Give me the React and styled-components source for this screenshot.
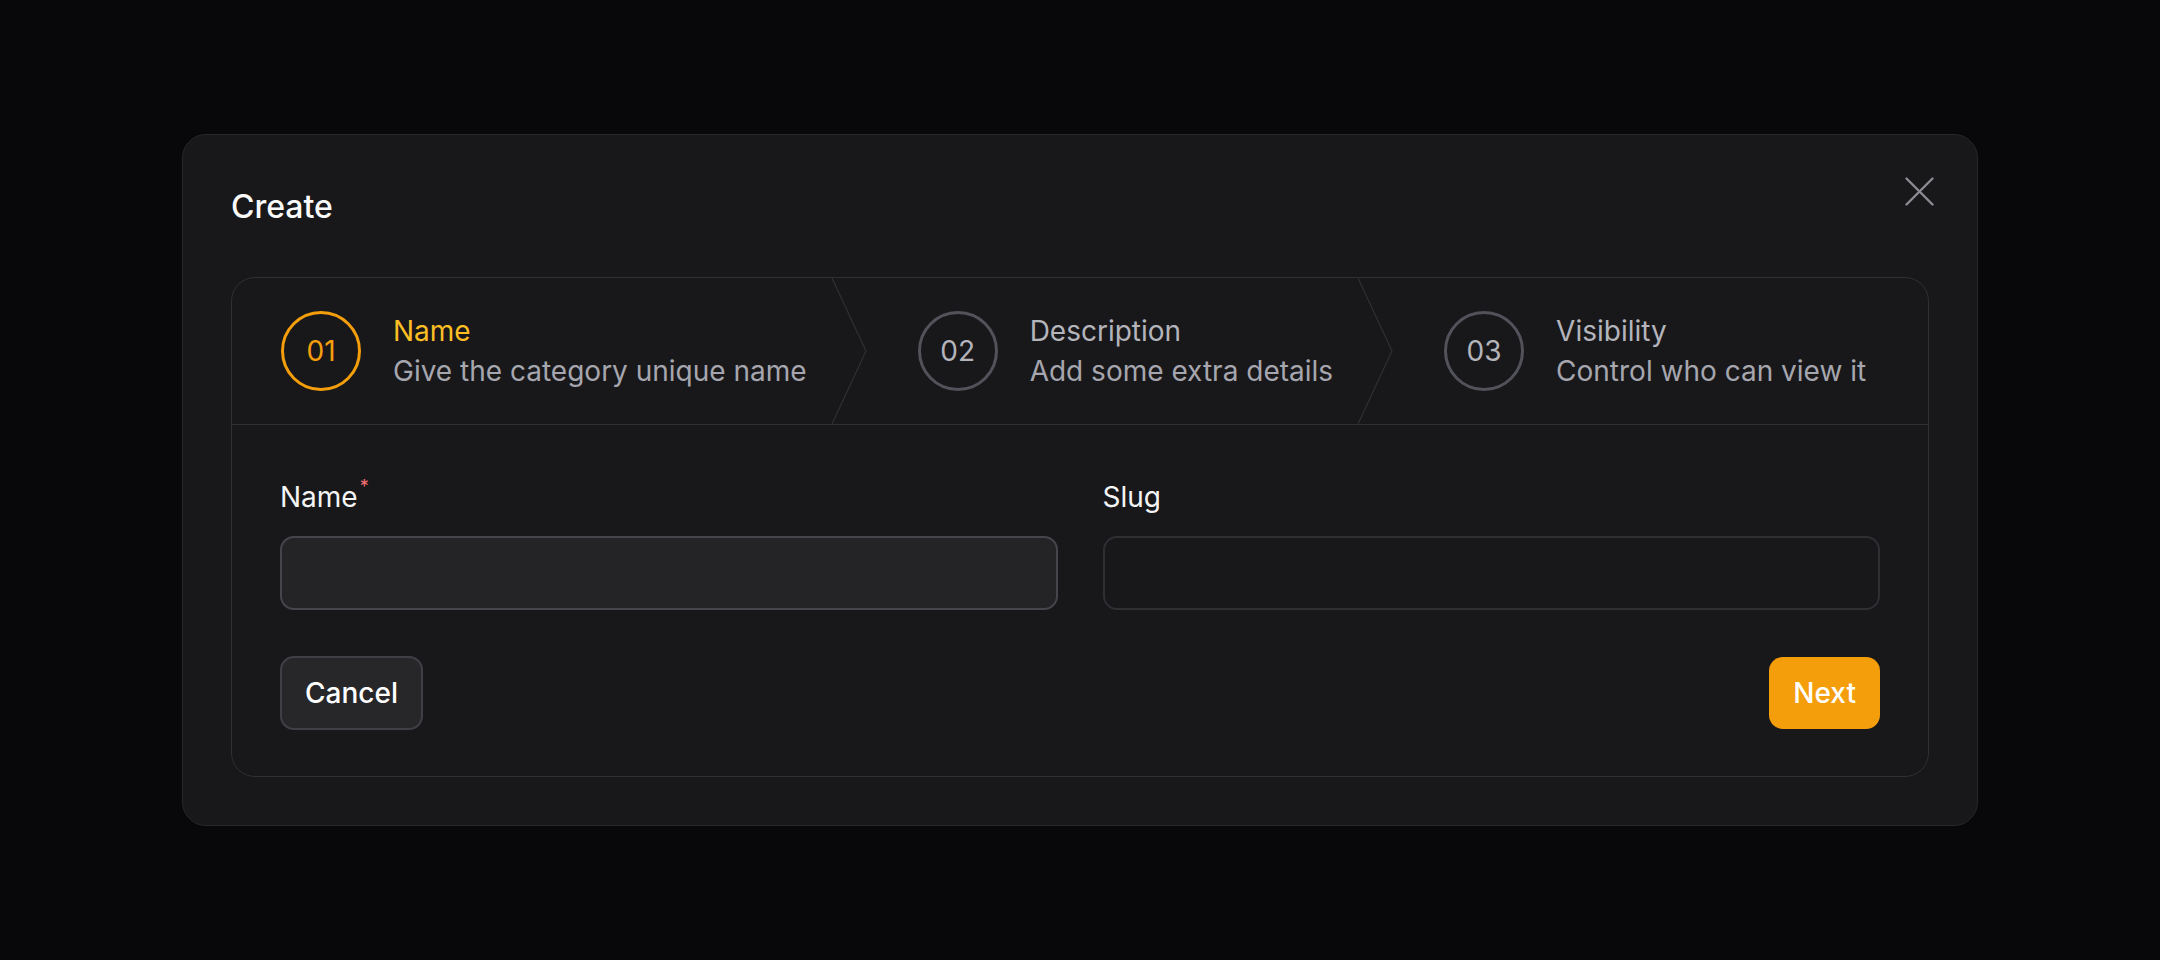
import React from "react";
import styled, { createGlobalStyle } from "styled-components";

const GlobalStyle = createGlobalStyle`
    * { box-sizing: border-box; }
    body {
        margin: 0;
        background: #08080a;
        font-family: Inter, "Noto Sans", "Liberation Sans", sans-serif;
        color: #f4f4f5;
    }
`;

const Page = styled.div`
    min-height: 960px;
    padding: 134px 0 0 182px;
`;

const Modal = styled.div`
    position: relative;
    width: 1796px;
    background: #18181b;
    border: 1px solid #27272a;
    border-radius: 24px;
    padding: 48px;
`;

const Header = styled.div`
    padding-top: 4px;
    margin-bottom: 50px;
`;

const Title = styled.h2`
    margin: 0;
    font-size: 32px;
    line-height: 40px;
    font-weight: 500;
    color: #fafafa;
`;

const CloseButton = styled.button`
    position: absolute;
    top: 42px;
    right: 43px;
    width: 29px;
    height: 29px;
    padding: 0;
    border: none;
    background: transparent;
    display: flex;
    align-items: center;
    justify-content: center;
    cursor: pointer;
`;

const Card = styled.div`
    border: 1px solid #2f2f34;
    border-radius: 24px;
    overflow: hidden;
`;

const Steps = styled.div`
    display: flex;
    height: 147px;
    border-bottom: 1px solid #2f2f34;
`;

const Step = styled.div`
    display: flex;
    align-items: center;
    gap: 32px;
    padding: 0 25px 0 ${p => (p.$first ? "49px" : "50px")};
`;

const Circle = styled.div`
    width: 80px;
    height: 80px;
    flex: none;
    border-radius: 50%;
    border: 3px solid ${p => (p.$active ? "#f59e0b" : "#52525b")};
    color: ${p => (p.$active ? "#f59e0b" : "#b4b4bb")};
    display: flex;
    align-items: center;
    justify-content: center;
    font-size: 28px;
    line-height: 1;
`;

const StepText = styled.div`
    display: flex;
    flex-direction: column;
    font-size: 28px;
    line-height: 40px;
    white-space: nowrap;
`;

const StepTitle = styled.span`
    color: ${p => (p.$active ? "#fbbf24" : "#b4b4bb")};
`;

const StepDesc = styled.span`
    color: #a6a6ae;
`;

const Chevron = styled.svg`
    flex: none;
    width: 36px;
    height: 146px;
`;

const Form = styled.div`
    padding: 52px 48px 46px;
`;

const Fields = styled.div`
    display: grid;
    grid-template-columns: 1fr 1fr;
    gap: 45px;
`;

const Field = styled.div`
    display: flex;
    flex-direction: column;
`;

const Label = styled.label`
    font-size: 28px;
    line-height: 40px;
    color: #f4f4f5;
    margin-bottom: 19px;
`;

const Required = styled.sup`
    color: #f87171;
    font-size: 18px;
    line-height: 0;
    margin-left: 2px;
    vertical-align: 14px;
`;

const Input = styled.input`
    height: 74px;
    width: 100%;
    border-radius: 14px;
    border: 2px solid ${p => (p.$active ? "#45454b" : "#2e2e33")};
    background: ${p => (p.$active ? "#242427" : "#18181b")};
    color: #f4f4f5;
    font-family: inherit;
    font-size: 28px;
    padding: 0 22px;
    outline: none;
`;

const Actions = styled.div`
    display: flex;
    justify-content: space-between;
    align-items: center;
    margin-top: 46px;
`;

const Button = styled.button`
    height: ${p => (p.$primary ? "72px" : "74px")};
    padding: 0 ${p => (p.$primary ? "24px" : "23px")};
    border-radius: 14px;
    border: ${p => (p.$primary ? "none" : "2px solid #3f3f46")};
    background: ${p => (p.$primary ? "#f59e0b" : "#27272a")};
    color: #ffffff;
    font-family: inherit;
    font-size: 28px;
    font-weight: 500;
    cursor: pointer;
`;

const steps = [
    { num: "01", title: "Name", desc: "Give the category unique name" },
    { num: "02", title: "Description", desc: "Add some extra details" },
    { num: "03", title: "Visibility", desc: "Control who can view it" },
];

const App = () => {
    const current = 0;
    return (
        <>
            <GlobalStyle />
            <Page>
                <Modal>
                    <Header>
                        <Title>Create</Title>
                    </Header>
                    <CloseButton aria-label="Close">
                        <svg width="29" height="29" viewBox="0 0 29 29" fill="none" stroke="#8b8b92" strokeWidth="2.4" strokeLinecap="round">
                            <line x1="1.5" y1="1.5" x2="27.5" y2="27.5" />
                            <line x1="27.5" y1="1.5" x2="1.5" y2="27.5" />
                        </svg>
                    </CloseButton>
                    <Card>
                        <Steps>
                            {steps.map((s, i) => (
                                <React.Fragment key={s.num}>
                                    <Step $first={i === 0}>
                                        <Circle $active={i === current}>{s.num}</Circle>
                                        <StepText>
                                            <StepTitle $active={i === current}>{s.title}</StepTitle>
                                            <StepDesc>{s.desc}</StepDesc>
                                        </StepText>
                                    </Step>
                                    {i < steps.length - 1 && (
                                        <Chevron viewBox="0 0 36 146" preserveAspectRatio="none">
                                            <polyline points="0,0 34,73 0,146" fill="none" stroke="#2f2f34" strokeWidth="1.2" />
                                        </Chevron>
                                    )}
                                </React.Fragment>
                            ))}
                        </Steps>
                        <Form>
                            <Fields>
                                <Field>
                                    <Label>Name<Required>*</Required></Label>
                                    <Input $active />
                                </Field>
                                <Field>
                                    <Label>Slug</Label>
                                    <Input />
                                </Field>
                            </Fields>
                            <Actions>
                                <Button>Cancel</Button>
                                <Button $primary>Next</Button>
                            </Actions>
                        </Form>
                    </Card>
                </Modal>
            </Page>
        </>
    );
};

export default App;
